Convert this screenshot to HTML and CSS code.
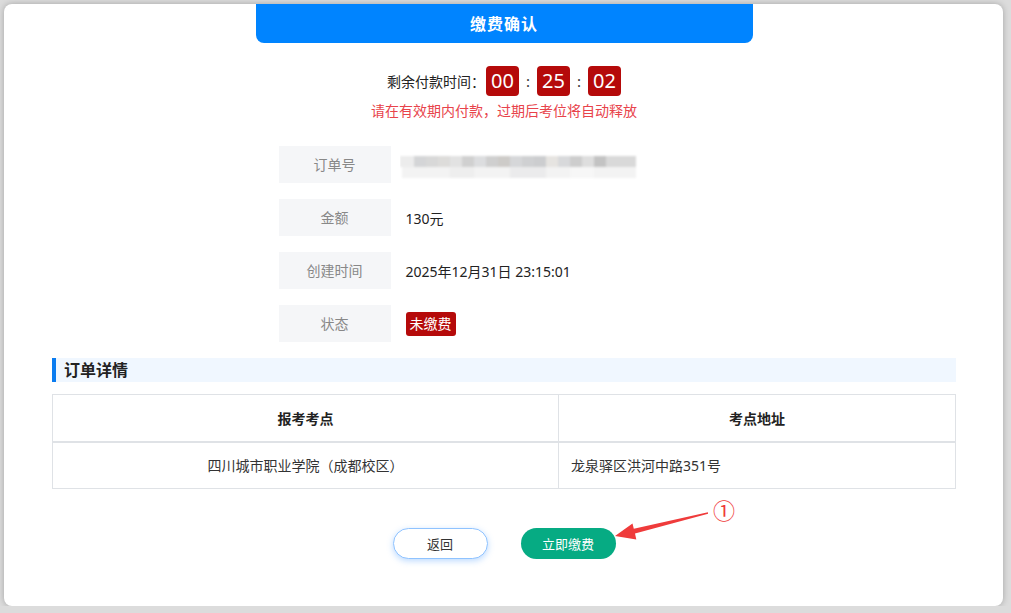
FILE: index.html
```html
<!DOCTYPE html>
<html lang="zh-CN">
<head>
    <meta charset="UTF-8">
    <meta name="viewport" content="width=device-width, initial-scale=1.0">
    <title>缴费确认</title>
    <link rel="stylesheet" href="styles.css">
</head>
<body>

    <div class="card">
        <div class="title-bar">缴费确认</div>

        <div class="countdown">
            <span class="countdown-label">剩余付款时间：</span>
            <span class="digit">00</span>
            <span class="colon">:</span>
            <span class="digit">25</span>
            <span class="colon">:</span>
            <span class="digit">02</span>
        </div>
        <p class="notice">请在有效期内付款，过期后考位将自动释放</p>

        <div class="info">
            <div class="info-row">
                <div class="info-label">订单号</div>
                <div class="info-value">
                    <svg class="blurred" width="240" height="26" viewBox="0 0 240 26">
                        <defs>
                            <filter id="soft"><feGaussianBlur stdDeviation="0.8" /></filter>
                        </defs>
                        <g filter="url(#soft)">
                            <rect x="0" y="2" width="236" height="11" fill="#dcdcdc" />
                            <rect x="0" y="2" width="14" height="11" fill="#ececec" />
                            <rect x="14" y="2" width="12" height="11" fill="#d4d5d7" />
                            <rect x="26" y="2" width="12" height="11" fill="#d8d8d8" />
                            <rect x="38" y="2" width="12" height="11" fill="#dddcda" />
                            <rect x="50" y="2" width="12" height="11" fill="#e2e2e2" />
                            <rect x="62" y="2" width="12" height="11" fill="#d0d0d0" />
                            <rect x="74" y="2" width="12" height="11" fill="#dcdddf" />
                            <rect x="86" y="2" width="12" height="11" fill="#cfcfcf" />
                            <rect x="98" y="2" width="12" height="11" fill="#cdcbc8" />
                            <rect x="110" y="2" width="12" height="11" fill="#d6d7d9" />
                            <rect x="122" y="2" width="12" height="11" fill="#cfd0d2" />
                            <rect x="134" y="2" width="12" height="11" fill="#cccdcf" />
                            <rect x="146" y="2" width="12" height="11" fill="#e6e4e1" />
                            <rect x="158" y="2" width="12" height="11" fill="#d8d9db" />
                            <rect x="170" y="2" width="12" height="11" fill="#cdcdcd" />
                            <rect x="182" y="2" width="12" height="11" fill="#dedede" />
                            <rect x="194" y="2" width="12" height="11" fill="#c3c3c3" />
                            <rect x="206" y="2" width="30" height="11" fill="#d9d9d9" />
                            <rect x="2" y="13" width="234" height="11" fill="#f3f3f3" />
                            <rect x="50" y="13" width="24" height="11" fill="#eeeeee" />
                            <rect x="110" y="13" width="36" height="11" fill="#ebebec" />
                            <rect x="170" y="13" width="24" height="11" fill="#f7f7f7" />
                        </g>
                    </svg>
                </div>
            </div>
            <div class="info-row">
                <div class="info-label">金额</div>
                <div class="info-value">130元</div>
            </div>
            <div class="info-row">
                <div class="info-label">创建时间</div>
                <div class="info-value">2025年12月31日 23:15:01</div>
            </div>
            <div class="info-row">
                <div class="info-label">状态</div>
                <div class="info-value"><span class="badge">未缴费</span></div>
            </div>
        </div>

        <h3 class="section-title">订单详情</h3>

        <table class="detail-table">
            <thead>
                <tr>
                    <th class="col-site">报考考点</th>
                    <th>考点地址</th>
                </tr>
            </thead>
            <tbody>
                <tr>
                    <td class="center">四川城市职业学院（成都校区）</td>
                    <td>龙泉驿区洪河中路351号</td>
                </tr>
            </tbody>
        </table>

        <div class="actions">
            <button class="btn btn-back">返回</button>
            <button class="btn btn-pay">立即缴费</button>
        </div>

        <!-- annotation arrow -->
        <svg class="arrow" width="150" height="60" viewBox="0 0 150 60">
            <polygon points="11,42 28.5,29.4 29.8,34.8 103.9,18.3 104.1,19.7 31,39.6 32.3,45.5" fill="#ef3b3b" />
        </svg>
        <span class="marker">①</span>
    </div>

</body>
</html>
```

FILE: styles.css
```css
* {
    box-sizing: border-box;
}

body {
    margin: 0;
    background-color: #dcdcdc;
    font-family: "Noto Sans", "Noto Sans CJK SC", sans-serif;
    font-size: 14px;
    color: #222;
}

.card {
    position: relative;
    margin: 4px 8px 0 4px;
    height: 602px;
    background-color: #fff;
    border-radius: 8px;
    box-shadow: 0 0 6px rgba(0, 0, 0, 0.25);
    padding: 0 47px 0 48px;
    overflow: hidden;
}

.title-bar {
    width: 497px;
    height: 39px;
    margin: 0 auto;
    background-color: #0084ff;
    border-radius: 0 0 8px 8px;
    color: #fff;
    font-size: 16px;
    font-weight: bold;
    letter-spacing: 1px;
    text-align: center;
    line-height: 40px;
}

.countdown {
    display: flex;
    justify-content: center;
    align-items: center;
    margin-top: 23px;
    height: 30px;
}

.countdown-label {
    font-size: 14px;
    color: #222;
    margin-right: 1px;
}

.digit {
    width: 33px;
    height: 30px;
    background-color: #b50a0a;
    border-radius: 4px;
    color: #fff;
    font-size: 20px;
    line-height: 30px;
    text-align: center;
}

.colon {
    width: 18px;
    text-align: center;
    font-size: 15px;
    color: #333;
}

.notice {
    margin: 5px 0 0;
    text-align: center;
    color: #e8434b;
    font-size: 14px;
    line-height: 20px;
}

.info {
    width: 451px;
    margin: 25px auto 0;
    display: flex;
    flex-direction: column;
    gap: 16px;
}

.info-row {
    display: flex;
    align-items: center;
    height: 37px;
}

.info-label {
    width: 112px;
    height: 37px;
    background-color: #f5f6f8;
    color: #888;
    text-align: center;
    line-height: 37px;
}

.info-value {
    margin-left: 15px;
    font-size: 14px;
    color: #222;
    display: flex;
    align-items: center;
}

.blurred {
    display: block;
    margin-left: -6px;
    margin-top: 4px;
}

.badge {
    display: inline-block;
    height: 24px;
    padding: 0 4px;
    background-color: #b50a0a;
    color: #fff;
    border-radius: 3px;
    line-height: 24px;
}

.section-title {
    margin: 16px 0 0;
    height: 24px;
    background-color: #f0f7ff;
    border-left: 4px solid #0a7cf0;
    padding-left: 8px;
    font-size: 16px;
    font-weight: bold;
    line-height: 24px;
    color: #222;
}

.detail-table {
    width: 100%;
    margin-top: 12px;
    border-collapse: collapse;
    table-layout: fixed;
}

.detail-table th,
.detail-table td {
    border: 1px solid #dfe2e6;
    height: 47px;
    font-size: 14px;
    color: #222;
    padding: 0 12px;
}

.detail-table th.col-site {
    width: 506px;
}

.detail-table th {
    font-weight: bold;
    text-align: center;
    border-bottom: 2px solid #dfe2e6;
}

.detail-table td {
    text-align: left;
    color: #333;
}

.detail-table td.center {
    text-align: center;
}

.actions {
    display: flex;
    justify-content: center;
    gap: 33px;
    margin-top: 39px;
}

.btn {
    width: 95px;
    height: 31px;
    border-radius: 16px;
    font-family: "Noto Sans CJK SC", sans-serif;
    font-size: 13px;
    cursor: pointer;
}

.btn-back {
    background-color: #fff;
    border: 1px solid #8fc3ff;
    color: #333;
    box-shadow: 0 2px 6px rgba(64, 150, 255, 0.35);
}

.btn-pay {
    background-color: #06ab83;
    border: none;
    color: #fff;
}

.arrow {
    position: absolute;
    left: 600px;
    top: 490px;
}

.marker {
    position: absolute;
    left: 709px;
    top: 489px;
    font-family: "Noto Sans CJK SC", sans-serif;
    font-size: 22px;
    color: #ef3b3b;
}
```
